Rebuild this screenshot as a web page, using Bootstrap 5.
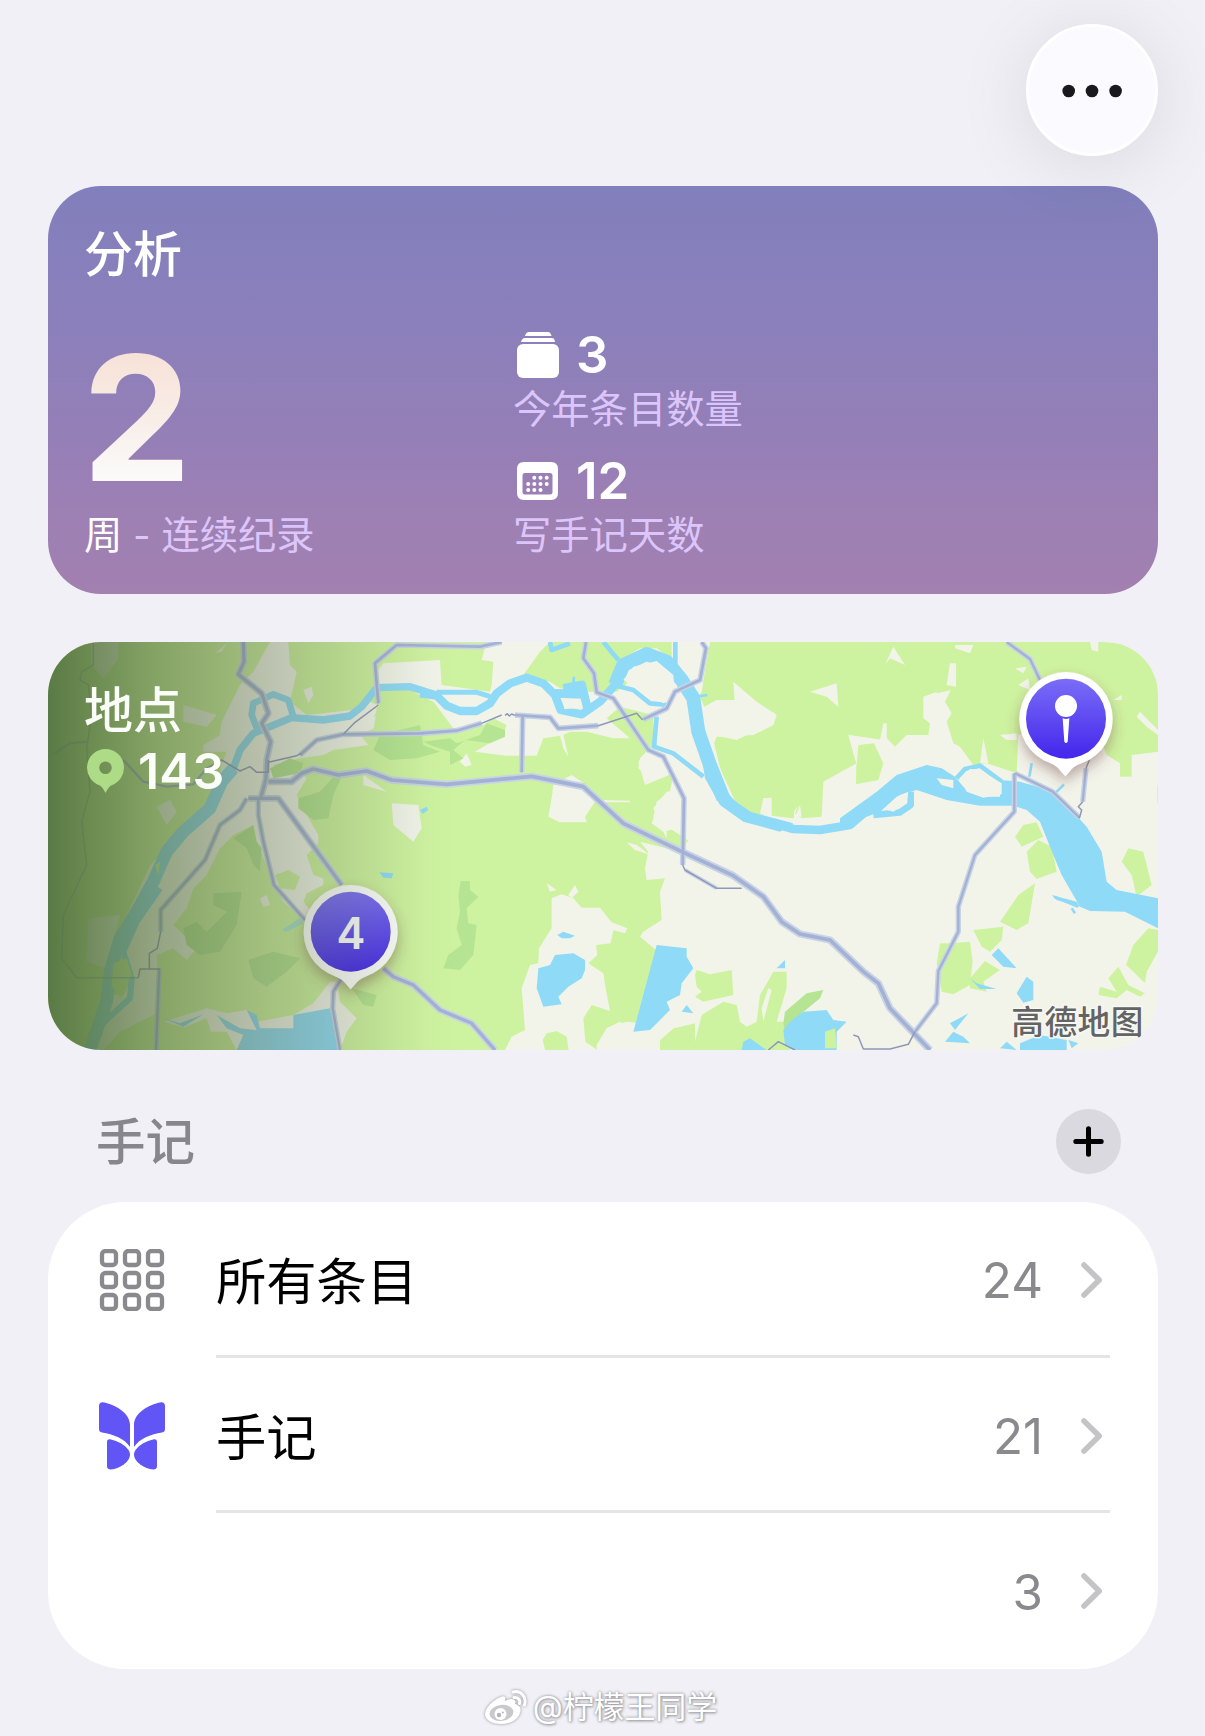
<!DOCTYPE html>
<html lang="zh-CN">
<head>
<meta charset="UTF-8">
<meta name="viewport" content="width=device-width, initial-scale=1.0">
<title>手记</title>

<link href="https://cdn.jsdelivr.net/npm/bootstrap@5.3.1/dist/css/bootstrap.min.css" rel="stylesheet">
<script src="https://cdn.jsdelivr.net/npm/bootstrap@5.3.1/dist/js/bootstrap.bundle.min.js"></script>

<style>
  body {
    background-color: #f1f0f6;
    font-family: Inter, "Noto Sans CJK SC", sans-serif;
    color: #000;
    height: 1736px;
    overflow: hidden;
  }
  .page { padding: 0 47px 0 48px; }
  svg { display: block; flex-shrink: 0; }

  .top_bar { height: 186px; padding-top: 24px; }
  .btn_more {
    width: 132px; height: 132px;
    background-color: #fbfaff;
    border: 3px solid #fff;
    box-shadow: 0 8px 76px rgba(0, 0, 0, .1);
  }

  .panel { height: 408px; border-radius: 53px; padding: 39px 38px 0 36px; overflow: hidden; }
  .panel_title { font-size: 49px; line-height: 60px; font-weight: 500; }
  .insight { background: linear-gradient(#817fbc, #8c80bb 36%, #957fb7 62%, #9d80b4 80%, #a280b0); }
  .insight_body { margin-top: 42px; }
  .streak { width: 429px; }
  .streak_num {
    font-size: 174px; line-height: 181px; font-weight: 700;
    margin-left: -2px;
    background: linear-gradient(#f7e2d8 15%, #f8ede7 50%, #fbfaf9 82%);
    -webkit-background-clip: text; background-clip: text;
    color: transparent;
  }
  .stat_num { font-size: 51px; line-height: 55px; font-weight: 600; }
  .stat_label { font-size: 38.3px; line-height: 55px; color: #dcc5fb; }

  .map_svg { position: absolute; left: 0; top: 0; }
  .map_text { z-index: 1; color: #fbfdf8; }
  .count { font-size: 50px; line-height: 60px; font-weight: 600; padding-left: 2px; }

  .section_head { height: 152px; padding: 30px 37px 0 48px; }
  .section_title { font-size: 49.5px; font-weight: 500; color: #87868c; line-height: 60px; padding-top: 2px; }
  .btn_add { width: 65px; height: 65px; background-color: #dad9e0; }

  .journals { height: 467px; border-radius: 78px; padding: 0 48px 0 50px; background-color: #fff; }
  .journal { height: 155.7px; }
  .journal_icon { width: 118px; }
  .journal_body { border-bottom: 3px solid #e5e5e7; font-size: 50.300px; line-height: 60px; padding: 3px 8px 0 0; }
  .journal:last-child .journal_body { border-color: transparent; }
  .journal_name { padding-top: 4px; }
  .journal_count { color: #8a8a8e; font-size: 49.3px; padding-top: 1px; margin-right: 38px; }

  .credit {
    height: 67px; padding: 10px 4px 0 0;
    font-size: 31px; color: #fff; letter-spacing: -.1px;
    text-shadow: 0 0 3px #8d8d92, 1px 1px 3px #a0a0a4;
  }
  .credit svg { filter: drop-shadow(0 0 1.5px #8d8d92); margin-right: 6px; }
</style>
</head>
<body>
<div class="page">

  <div class="top_bar d-flex justify-content-end">
    <button type="button" class="btn_more rounded-circle d-flex align-items-center justify-content-center p-0" aria-label="更多">
      <svg width="60" height="15" viewBox="0 0 60 15" fill="#1a1a1e">
        <circle cx="6.7" cy="8" r="6.3"/><circle cx="30" cy="8" r="6.3"/><circle cx="53.6" cy="8" r="6.3"/>
      </svg>
    </button>
  </div>

  <!-- 分析 -->
  <div class="panel insight text-white">
    <div class="panel_title">分析</div>
    <div class="insight_body d-flex">
      <div class="streak">
        <div class="streak_num">2</div>
        <div class="stat_label"><span class="text-white">周</span> - 连续纪录</div>
      </div>
      <div>
        <div class="stat_num d-flex align-items-center">
          <svg class="ms-1 me-3" width="43" height="46" viewBox="0 0 43 46" fill="#fff">
            <path d="M8 4Q9 0 12 0H31Q33.500 0 34.500 4Z"/>
            <path d="M4 10Q5 6 8 6H35Q37.500 6 38 10Z"/>
            <rect y="12" width="42" height="34" rx="6"/>
          </svg>
          3
        </div>
        <div class="stat_label">今年条目数量</div>
        <div class="stat_num d-flex align-items-center mt-3">
          <svg class="ms-1 me-3" width="43" height="38" viewBox="0 0 43 38">
            <path fill="#fff" fill-rule="evenodd" d="M7 0H34Q41 0 41 7V31Q41 38 34 38H7Q0 38 0 31V7Q0 0 7 0ZM8 11Q5.500 11 5.500 13.500V30Q5.500 32.500 8 32.500H33Q35.500 32.500 35.500 30V13.500Q35.500 11 33 11Z"/>
            <g fill="#fff">
              <circle cx="17.300" cy="15.800" r="2"/><circle cx="23.500" cy="15.800" r="2"/><circle cx="29.700" cy="15.800" r="2"/>
              <circle cx="11.200" cy="22" r="2"/><circle cx="17.300" cy="22" r="2"/><circle cx="23.500" cy="22" r="2"/><circle cx="29.700" cy="22" r="2"/>
              <circle cx="11.200" cy="28" r="2"/><circle cx="17.300" cy="28" r="2"/><circle cx="23.500" cy="28" r="2"/>
            </g>
          </svg>
          12
        </div>
        <div class="stat_label">写手记天数</div>
      </div>
    </div>
  </div>

  <!-- 地点 -->
  <div class="panel position-relative mt-5">
    <svg class="map_svg" width="1110" height="408" viewBox="24 21 3330 1224" preserveAspectRatio="none">
      <defs>
        <linearGradient id="shade" gradientUnits="userSpaceOnUse" x1="24" y1="0" x2="1260" y2="0">
          <stop offset="0" stop-color="#50703e" stop-opacity=".92"/>
          <stop offset=".1" stop-color="#56743f" stop-opacity=".82"/>
          <stop offset=".25" stop-color="#56703f" stop-opacity=".62"/>
          <stop offset=".5" stop-color="#5c6c48" stop-opacity=".4"/>
          <stop offset=".75" stop-color="#5c6c48" stop-opacity=".19"/>
          <stop offset=".92" stop-color="#5c6c48" stop-opacity=".03"/>
          <stop offset="1" stop-color="#5c6c48" stop-opacity="0"/>
        </linearGradient>
        <linearGradient id="pinFill" x1="0" y1="0" x2="0" y2="1">
          <stop offset="0" stop-color="#7a6df7"/>
          <stop offset="1" stop-color="#4326ec"/>
        </linearGradient>
        <filter id="pinShadow" x="-40%" y="-30%" width="180%" height="180%">
          <feDropShadow dx="0" dy="20" stdDeviation="20" flood-color="#6b3b3b" flood-opacity=".42"/>
        </filter>
      </defs>

      <rect x="24" y="21" width="3330" height="1224" fill="#f2f4ea"/>

      <!-- 绿地 -->
      <g fill="#cef3a0">
        <path d="M24 21H1760V215L1840 210L1850 330L1830 340L1800 370L1795 400L1825 430L1815 450L1900 415L1890 470L1850 500L1840 550L1870 590L1880 610L1880 570L1940 565L1950 610L1920 650L1800 620L1825 650L1815 700L1820 735L1875 730L1860 770L1865 855L1810 890L1800 905L1848 945L1780 1190L1740 1160L1700 1180L1670 1245H24Z"/>
        <path d="M1740 21H1895V75L1850 40L1800 40L1740 75Z"/>
        <path d="M1765 215L1820 205L1850 225L1830 340L1765 250Z"/>
        <!-- 北部林地 -->
        <path d="M2010 21H2710L2740 70L2740 140L2720 160L2650 185L2650 250L2670 265L2665 300L2600 300L2565 335L2540 310L2530 265L2520 315L2425 300L2450 385L2350 440L2345 545L2285 550L2265 535L2275 510L2262 530V550L2210 560L2120 540L2075 500L2050 430L2020 330L2030 305L2140 300L2200 270L2205 235L2090 195L2030 195L1985 220L1975 190L1985 170L2000 60Z"/>
        <path d="M2450 322L2500 320L2530 385L2515 435L2448 448Z"/>
        <path d="M2745 21H3180C3290 21 3354 60 3354 170V350L3275 360V425H3240V385L3200 360L3150 230L2935 300L2930 415L2840 385L2800 390L2760 335L2740 325L2720 260L2735 235L2715 200L2740 150L2755 90Z"/>
        <path d="M3352 450h4v55h-4Z"/>
        <path d="M2690 21H2760V160L2690 175Z"/>
        <!-- 东部零星绿地 -->
        <path d="M2925 605L2950 570L2990 562L3010 605L2945 635Z"/>
        <path d="M2960 650L2995 615L3035 635L3050 710L2990 732L2970 710Z"/>
        <path d="M2880 860L2935 780L2985 745L2965 865L2930 885Z"/>
        <path d="M2800 885L2890 875L2885 915L2850 950L2825 935Z"/>
        <path d="M2690 985L2700 925H2730L2790 920L2798 980L2790 1050L2740 1078L2705 1070Z"/>
        <path d="M2790 1030L2835 978L2880 1005L2830 1040L2840 1070L2790 1060Z"/>
        <path d="M3245 680L3265 640L3310 650L3335 750L3290 785L3275 720Z"/>
        <path d="M3258 990L3280 930L3325 880L3354 885V950L3320 1010L3315 1045L3280 1010Z"/>
        <path d="M3175 1080L3180 1055L3230 1070L3205 1030L3235 995L3265 1050L3315 1075L3300 1085L3260 1065L3230 1090Z"/>
        <!-- 南部零星绿地 -->
        <path d="M1965 1020L1970 1005L2010 1018L2075 1005L2080 1080L1990 1100L1965 1085L1985 1070L1970 1055Z"/>
        <path d="M1860 1215L1900 1180L1965 1165V1220L1985 1140L2050 1100L2090 1110L2100 1160L2120 1175L2150 1160L2160 1080L2200 1010L2240 1010V1060L2210 1160L2310 1160L2295 1180L2250 1245H1860Z"/>
      </g>

      <!-- 城区与空地 -->
      <g fill="#f2f4ea">
        <path d="M690 21H745L750 90L770 110L750 200L800 240L935 225L960 230L990 200L1025 215L1000 245L1080 215L1040 260L960 300L985 330L880 345L850 360L780 370L700 390L700 425L780 410L800 430L770 480L800 540L835 600L835 625L800 660L820 720L850 730L850 750L800 775L790 800L830 850L800 860L730 800L690 720L660 640L630 620L640 570L580 600L540 640L500 720L460 760L440 820L400 870L430 900L470 940L440 975L400 940L350 960L360 1130L240 1190L190 1245H140L190 1140L200 950L270 820L330 690L500 530L550 430L540 400L560 350L490 350L490 330L540 300L545 260L600 150L640 110Z"/>
        <path d="M1015 105L1030 85L1200 75L1205 150L1350 170L1355 150L1360 80L1325 75L1340 21H1530L1500 50L1450 120L1530 140L1560 160L1620 170L1730 170L1770 140L1880 140L1985 165L2010 21H1950L1930 80L2000 230L2040 400L2100 530L2340 560L2350 640L1980 640L1860 560L1840 520L1880 470L1960 460L1900 340L1840 320L1840 240L1740 215L1700 250L1770 310L1720 310L1640 290L1590 290L1570 300L1585 365L1570 340L1560 302L1510 310L1490 362L1400 362L1305 350L1390 300L1400 270L1360 250L1330 270L1240 280L1180 200L1100 160L1015 165Z"/>
        <path d="M150 21H235V70L190 130L155 90ZM525 55L560 25L545 50ZM790 165L815 155L820 180L805 205ZM970 420L1040 470L970 450ZM350 515L390 495L410 530L380 570ZM1055 505L1135 510L1145 580L1120 620L1060 570ZM530 240L430 210V260L500 275Z"/>
        <path d="M1540 450L1595 420L1640 450L1665 500L1635 545L1640 562H1560L1525 545L1535 490ZM1260 380L1280 355L1295 390L1275 395ZM1795 380L1830 340L1850 400L1825 430L1815 450ZM1760 622L1790 630L1830 660L1785 645Z"/>
        <path d="M1520 745L1550 765L1530 770ZM1585 780L1605 750L1615 770L1595 790ZM1690 495L1770 497V502H1690ZM1860 500L1890 480L1910 450L1950 470L1950 570L1870 590L1835 565Z"/>
        <!-- 湖区周边 -->
        <path d="M1535 790L1565 778L1600 790L1625 818H1680L1715 862L1762 880L1755 895L1720 885L1712 925L1668 930L1672 960L1645 985L1690 1015L1697 1060L1710 1128L1655 1110L1630 1150L1636 1220L1672 1245H1395L1415 1205L1455 1185L1445 1060L1470 990L1495 985L1497 940L1535 880Z"/>
        <path d="M1670 1230L1700 1180L1760 1160L1850 1170L1900 1120L1950 1060L1980 1120L1960 1165L1900 1180L1860 1215V1245H1670Z"/>
        <path d="M2020 300L2085 215L2080 140L2150 200L2210 240L2200 270L2140 290L2090 315ZM2160 535L2170 490L2195 488V545ZM2265 545L2280 510L2285 545ZM2535 90L2560 35L2595 90L2550 70ZM2310 170L2390 145L2395 215L2360 185ZM2730 85H2748V155L2720 150Z"/>
        <path d="M2745 30H2800L2790 55L2745 40ZM3150 21H3175V50L3155 45ZM3290 245L3300 230L3354 285V300L3320 275ZM2880 300L2930 295V315L2900 315ZM2425 300L2530 315V265L2540 265V320L2455 330L2450 390ZM2820 385L2830 310L2845 385ZM2925 100L2960 95L2950 115ZM2935 150L2965 130L2970 165ZM3220 195L3245 180V195Z"/>
        <path d="M820 1105L870 1040L890 1040L900 1100L950 1150L920 1190L900 1245H590L560 1190L480 1190L370 1160L500 1120L560 1135L620 1125L650 1160L760 1140ZM660 790L680 780L690 810L670 815ZM2165 1120L2185 1060L2195 1065L2170 1160Z"/>
        <path d="M145 850L240 840L220 920L200 1000L140 980Z"/>
      </g>

      <!-- 城区边缘的绿地 -->
      <g fill="#cef3a0">
        <path d="M1010 220L1060 175L1140 190L1200 240L1160 275L1000 290Z"/>
        <path d="M1530 75L1640 35L1730 80L1715 150L1670 175L1640 110L1600 150L1470 105Z"/>
        <path d="M705 720L745 705L780 725L765 765L720 760Z"/>
        <path d="M215 1000L250 960L280 1020L250 1080H215ZM400 1190L500 1150L530 1245H400Z"/>
        <path d="M1508 1215L1520 1195L1550 1188L1580 1205L1586 1245H1515Z"/>
      </g>
      <g fill="#b5e592">
        <path d="M690 400L750 370L790 385L780 415L700 430ZM775 490L840 470L885 420L910 415L880 480L865 550L820 555L775 520ZM580 610L640 570L650 620L665 640L660 710L640 690L620 640Z"/>
        <path d="M430 880L470 860L500 890L560 830L520 810L520 775L605 770L590 870L540 950L480 960L440 930ZM625 975L700 950L780 970L740 1010L680 1055L640 1030ZM935 1060L1010 1080L1000 1115L970 1110Z"/>
        <path d="M1020 300L1140 270L1150 330L1200 350L1130 370L1050 375L1000 345ZM1150 320L1230 310L1250 325L1320 300L1340 265L1395 285V305L1350 325L1275 315L1240 345L1270 370L1230 390V350L1170 330Z"/>
        <path d="M1262 738H1290V765L1315 785L1280 820L1285 865L1310 870L1300 960L1260 1005L1210 1000L1225 960L1265 930L1250 880L1260 830L1255 780Z"/>
        <path d="M2235 1130L2300 1075L2350 1065L2340 1090L2285 1135L2235 1190L2230 1165Z"/>
      </g>

      <!-- 水系 -->
      <g fill="none" stroke="#8fdaf7" stroke-linejoin="round">
        <path stroke-width="15" d="M1350 184L1310 172H1190"/>
        <path stroke-width="22" d="M1190 180L1110 155L1010 158L965 215L930 243L850 255L755 248L690 275L640 295L600 345L580 400L530 450"/>
        <path stroke-width="20" d="M760 245L745 195L700 178L640 205L635 240L655 290"/>
        <path stroke-width="38" d="M580 400L545 440L510 520L430 590L380 650L340 740L290 830L240 910L210 1010L200 1100L150 1245"/>
        <path stroke-width="18" d="M360 760L290 860L250 950L275 1030L270 1090L150 1200"/>
        <path stroke-width="25" d="M1140 175L1190 182L1220 212L1260 228H1310L1350 205L1370 175L1410 145L1460 128L1510 145L1545 180L1562 225L1625 238L1680 200L1725 150L1740 100"/>
        <path stroke-width="26" d="M1545 175L1630 178M1570 160L1625 150L1645 230"/>
        <path stroke-width="42" d="M1725 150L1750 90L1820 57L1880 80L1925 135L1960 190L1975 290L2010 390L2050 490"/>
        <path stroke-width="14" d="M1720 150L1780 165L1830 205L1880 210M1850 245L1842 335L1900 355L1990 425M1530 21L1535 45L1590 25M1690 21L1735 75M1906 21V95"/>
        <path stroke-width="26" d="M2050 490L2130 545L2260 582L2340 585L2430 570L2500 510L2580 460L2640 430"/>
        <path stroke-width="20" d="M2500 540L2580 532L2612 510V470"/>
        <path stroke-width="14" d="M2750 430L2775 402L2820 392L2885 440"/>
        <path stroke-width="8" d="M2968 425L2975 385M3045 475L3072 448M3042 785L3115 815M3105 835L3095 820M1600 145L1602 125M1970 185L2002 180"/>
      </g>
      <g fill="#8fdaf7">
        <path d="M1980 330L2010 370L2060 470L2110 525L2260 565L2220 590L2110 560L2040 510L1995 430Z"/>
        <path d="M2400 550L2510 470L2570 420L2660 390L2705 400L2745 425L2770 455L2830 485H2880V435L2940 440L3045 470L3140 575L3185 650L3200 740L3230 765L3354 790V880L3255 830L3150 828L3120 815L3065 720L3040 660L3000 560L2960 525L2920 512L2820 512L2720 495L2630 465L2580 480L2520 530L2400 575Z"/>
        <path d="M3035 780L3110 800L3120 815L3050 795Z"/>
        <path d="M760 1140L870 1120L900 1245H590L610 1200L560 1180L530 1140L600 1180L650 1185L620 1125L650 1140L660 1180L760 1180ZM370 1150L420 1165L490 1138L430 1175Z"/>
        <path d="M1018 712L1060 715L1055 730L1030 728ZM1140 525L1160 515L1165 525L1148 537ZM1552 900L1570 890L1605 902L1590 910L1565 910Z"/>
        <path d="M1495 1000L1530 990L1545 960L1600 955L1635 975V1005L1625 1030L1585 1055L1555 1085L1565 1108L1510 1115L1490 1060Z"/>
        <path d="M1850 930L1940 940L1940 965L1960 1000L1925 1045L1920 1080L1880 1100L1890 1125L1830 1185L1780 1190Z"/>
        <path d="M2210 1000L2235 975V1000ZM1925 1130L1940 1110L1960 1135Z"/>
        <path d="M2105 1245L2110 1220L2130 1210L2180 1245ZM2230 1185L2250 1160L2290 1130L2360 1125L2380 1155L2420 1160L2390 1190V1245H2260L2235 1230Z"/>
        <path d="M2855 960L2875 940L2930 1000L2890 995ZM2790 1030L2810 1045L2870 1062L2820 1062ZM2930 1075L2960 1025L2980 1040V1095L2950 1103ZM2730 1165L2785 1135L2745 1185ZM2715 1220L2740 1190L2770 1205L2790 1225ZM2940 1225L3000 1200L3080 1215V1245H2940ZM2880 1240L2900 1220L2930 1245ZM3085 1215L3115 1225L3095 1240Z"/>
        <path d="M725 885L780 850L790 865L740 890Z" opacity=".6"/>
      </g>
      <!-- 江心洲 -->
      <path fill="#f2f4ea" d="M2530 522L2570 485L2605 470L2600 505L2560 530ZM2690 430L2740 435L2740 460L2705 450ZM2758 430L2790 402L2820 405L2885 445V478L2830 488L2780 470ZM1572 195L1618 192V220L1572 222ZM1750 135L1780 95L1850 78L1900 120L1905 180L1870 205L1790 155Z"/>
      <path fill="#cef3a0" d="M2355 1190L2385 1180L2390 1240H2355ZM345 690L360 680L355 720ZM220 985L260 970L275 1020L240 1090L215 1050Z"/>

      <!-- 道路 -->
      <g fill="none" stroke-linejoin="round">
        <g stroke="#c8d3e5">
          <path stroke-width="22" d="M685 440H755L785 415L820 402L895 420L980 408L1055 435L1220 448L1475 424L1630 455L1750 565L1930 652L2080 722L2170 785L2225 860L2280 897L2370 915L2470 1010L2515 1045L2550 1120L2670 1245"/>
          <path stroke-width="20" d="M610 21L612 80L595 118L665 175L685 235L665 265L692 320L680 375L678 430L662 490M625 490H715L905 750M1030 1000L1060 1025L1120 1050L1200 1125L1295 1165L1365 1245"/>
          <path stroke-width="17" d="M1385 21L1320 35L1070 30L1005 85L1015 205M910 298L1140 295L1250 287L1325 265M780 360L830 315L910 298M1425 240L1530 247L1555 280L1675 272M1448 240L1445 412M1638 21L1630 70L1662 115L1670 172L1720 190L1825 345L1870 365L1932 490L1928 690M1985 21L1998 40L1980 135L1905 170L1880 220L1810 253"/>
          <path stroke-width="16" d="M655 490V540L670 620L702 750L795 855M620 490L600 525L540 570L495 675L362 825V890M905 1030L880 1070L878 1120L900 1245M358 1000L348 1245M2900 21L2970 72L3000 135M2923 415V530L2805 660L2755 815V890L2695 1008L2690 1105L2625 1190M2925 415L3038 470L3118 548M3138 400L3128 500"/>
          <path stroke-width="12" d="M1935 705L2030 760"/>
        </g>
        <g stroke="#a3b1d4">
          <path stroke-width="11" d="M685 440H755L785 415L820 402L895 420L980 408L1055 435L1220 448L1475 424L1630 455L1750 565L1930 652L2080 722L2170 785L2225 860L2280 897L2370 915L2470 1010L2515 1045L2550 1120L2670 1245"/>
          <path stroke-width="10" d="M610 21L612 80L595 118L665 175L685 235L665 265L692 320L680 375L678 430L662 490M625 490H715L905 750M1030 1000L1060 1025L1120 1050L1200 1125L1295 1165L1365 1245"/>
          <path stroke-width="8" d="M1385 21L1320 35L1070 30L1005 85L1015 205M910 298L1140 295L1250 287L1325 265M780 360L830 315L910 298M1425 240L1530 247L1555 280L1675 272M1448 240L1445 412M1638 21L1630 70L1662 115L1670 172L1720 190L1825 345L1870 365L1932 490L1928 690M1985 21L1998 40L1980 135L1905 170L1880 220L1810 253"/>
          <path stroke-width="7" d="M655 490V540L670 620L702 750L795 855M620 490L600 525L540 570L495 675L362 825V890M905 1030L880 1070L878 1120L900 1245M358 1000L348 1245M2900 21L2970 72L3000 135M2923 415V530L2805 660L2755 815V890L2695 1008L2690 1105L2625 1190M2925 415L3038 470L3118 548M3138 400L3128 500"/>
          <path stroke-width="7" d="M45 355L90 325L140 320M250 375L310 440L380 455L460 448L500 400"/>
        </g>
        <g stroke="#8f98b8" stroke-width="4.500">
          <path opacity=".7" d="M160 21V90L125 110L120 135L145 150L155 240L140 340L150 470L125 560L140 690L70 840L65 970L110 1028H295"/>
          <path d="M295 1028L300 1002H360M362 890L352 940L328 955V1000M685 382L770 362L785 355M500 400L545 375L600 408L630 395L650 412H685V375M910 298L945 262L1015 210M1325 265L1385 240M1395 241L1402 236L1408 243L1415 237L1425 241M1675 272L1790 235L1808 255M1928 690L1935 705L2030 760H2105M2185 1245L2215 1220L2265 1245M2440 1200L2455 1205L2470 1242H2550L2605 1228L2625 1190M3148 375L3138 400M3128 500L3115 515L3125 525L3118 550"/>
        </g>
      </g>

      <!-- 数量标记 -->
      <g filter="url(#pinShadow)">
        <path fill="#fff" d="M932 750a141 141 0 0 1 44 275Q955 1033 946 1047L932 1063L918 1047Q909 1033 888 1025A141 141 0 0 1 932 750Z"/>
      </g>
      <circle cx="932" cy="890" r="120" fill="url(#pinFill)"/>
      <text x="933" y="941" text-anchor="middle" font-family="Inter, sans-serif" font-size="130" font-weight="600" fill="#fff">4</text>

      <rect x="24" y="21" width="1240" height="1224" fill="url(#shade)"/>

      <!-- 地点标记 -->
      <g filter="url(#pinShadow)">
        <path fill="#fff" d="M3078 111a141 141 0 0 1 46 274Q3100 394 3091 407L3076 424L3061 407Q3052 394 3032 385A141 141 0 0 1 3078 111Z"/>
      </g>
      <circle cx="3078" cy="251" r="120" fill="url(#pinFill)"/>
      <circle cx="3078" cy="213" r="33" fill="#fff"/>
      <path fill="#fff" d="M3068 250Q3078 254 3088 250L3083 320Q3078 328 3073 320Z"/>

      <text x="2914" y="1198" textLength="396" font-family="'Noto Sans CJK SC', sans-serif" font-size="98" font-weight="500" fill="#636463" stroke="#f8f8f4" stroke-width="8" paint-order="stroke">高德地图</text>
    </svg>

    <div class="map_text position-relative">
      <div class="panel_title">地点</div>
      <div class="count d-flex align-items-center">
        <svg width="52" height="44" viewBox="0 0 52 44">
          <path fill="#addb86" fill-rule="evenodd" d="M19.500 0A18.700 18.700 0 0 1 25 36.500Q22 38.500 19.500 44Q17 38.500 14 36.500A18.700 18.700 0 0 1 19.500 0ZM19.500 12.500A6.300 6.300 0 1 0 19.500 25.100A6.300 6.300 0 1 0 19.500 12.500Z"/>
        </svg>
        143
      </div>
    </div>
  </div>

  <!-- 手记 -->
  <div class="section_head d-flex align-items-center justify-content-between">
    <div class="section_title">手记</div>
    <button type="button" class="btn_add border-0 rounded-circle d-flex align-items-center justify-content-center p-0" aria-label="新建">
      <svg width="31" height="31" viewBox="0 0 31 31" fill="none" stroke="#000" stroke-width="5" stroke-linecap="round">
        <path d="M15.500 2.800V28.200M2.800 15.500H28.200"/>
      </svg>
    </button>
  </div>

  <div class="journals">
    <div class="journal d-flex">
      <div class="journal_icon d-flex align-items-center">
        <svg width="68" height="62" viewBox="-2 0 68 62" fill="none" stroke="#8a8a8e" stroke-width="4.300">
          <rect x="2" y="2" width="14" height="14" rx="3.500"/><rect x="25" y="2" width="14" height="14" rx="3.500"/><rect x="48" y="2" width="14" height="14" rx="3.500"/>
          <rect x="2" y="24" width="14" height="14" rx="3.500"/><rect x="25" y="24" width="14" height="14" rx="3.500"/><rect x="48" y="24" width="14" height="14" rx="3.500"/>
          <rect x="2" y="46" width="14" height="14" rx="3.500"/><rect x="25" y="46" width="14" height="14" rx="3.500"/><rect x="48" y="46" width="14" height="14" rx="3.500"/>
        </svg>
      </div>
      <div class="journal_body flex-grow-1 d-flex align-items-center">
        <span class="journal_name me-auto">所有条目</span>
        <span class="journal_count">24</span>
        <svg width="21" height="36" viewBox="0 0 21 36" fill="none" stroke="#c4c4c7" stroke-width="5.500" stroke-linecap="round" stroke-linejoin="round"><path d="M3 3L18.200 18L3 33"/></svg>
      </div>
    </div>

    <div class="journal d-flex">
      <div class="journal_icon d-flex align-items-center">
        <svg width="68" height="68" viewBox="-1 0 68 68" fill="#6155f5">
          <path d="M0 4Q0 0 4 .2C17 3 31 11 31 23V45C26 37 14 32 3 30.500Q0 30 0 27Z"/>
          <path d="M66 4Q66 0 62 .2C49 3 35 11 35 23V45C40 37 52 32 63 30.500Q66 30 66 27Z"/>
          <path d="M8 40Q8 37 11 37.300C20 39 31 46 31 52.500C31 60 20 67 12 67.500Q8 67.500 8 64Z"/>
          <path d="M58 40Q58 37 55 37.300C46 39 35 46 35 52.500C35 60 46 67 54 67.500Q58 67.500 58 64Z"/>
        </svg>
      </div>
      <div class="journal_body flex-grow-1 d-flex align-items-center">
        <span class="journal_name me-auto">手记</span>
        <span class="journal_count">21</span>
        <svg width="21" height="36" viewBox="0 0 21 36" fill="none" stroke="#c4c4c7" stroke-width="5.500" stroke-linecap="round" stroke-linejoin="round"><path d="M3 3L18.200 18L3 33"/></svg>
      </div>
    </div>

    <div class="journal d-flex">
      <div class="journal_icon"></div>
      <div class="journal_body flex-grow-1 d-flex align-items-center justify-content-end">
        <span class="journal_count">3</span>
        <svg width="21" height="36" viewBox="0 0 21 36" fill="none" stroke="#c4c4c7" stroke-width="5.500" stroke-linecap="round" stroke-linejoin="round"><path d="M3 3L18.200 18L3 33"/></svg>
      </div>
    </div>
  </div>

  <div class="credit d-flex align-items-center justify-content-center">
    <svg width="42" height="35" viewBox="0 0 42 35">
      <path fill="#fff" d="M16 7C20 5 21 8 20 11C25 8 32 8 30 14C34 15 37 18 35 23C33 30 25 34 16 34C7 34 0 30 0 24C0 18 9 9 16 7Z"/>
      <ellipse cx="16.500" cy="23" rx="12" ry="8" fill="#c9c9cd" transform="rotate(-8 16 23)"/>
      <circle cx="15.500" cy="24" r="6" fill="#fff"/>
      <circle cx="14" cy="25" r="2.200" fill="#b5b5b9"/><circle cx="17.800" cy="22.500" r="1" fill="#b5b5b9"/>
      <path fill="none" stroke="#fff" stroke-width="3" stroke-linecap="round" d="M28 2C36 0 42 7 39.500 15M29 7.500C33 7 35.500 10 34.500 13.500"/>
    </svg>
    <span>@柠檬王同学</span>
  </div>

</div>
</body>
</html>
